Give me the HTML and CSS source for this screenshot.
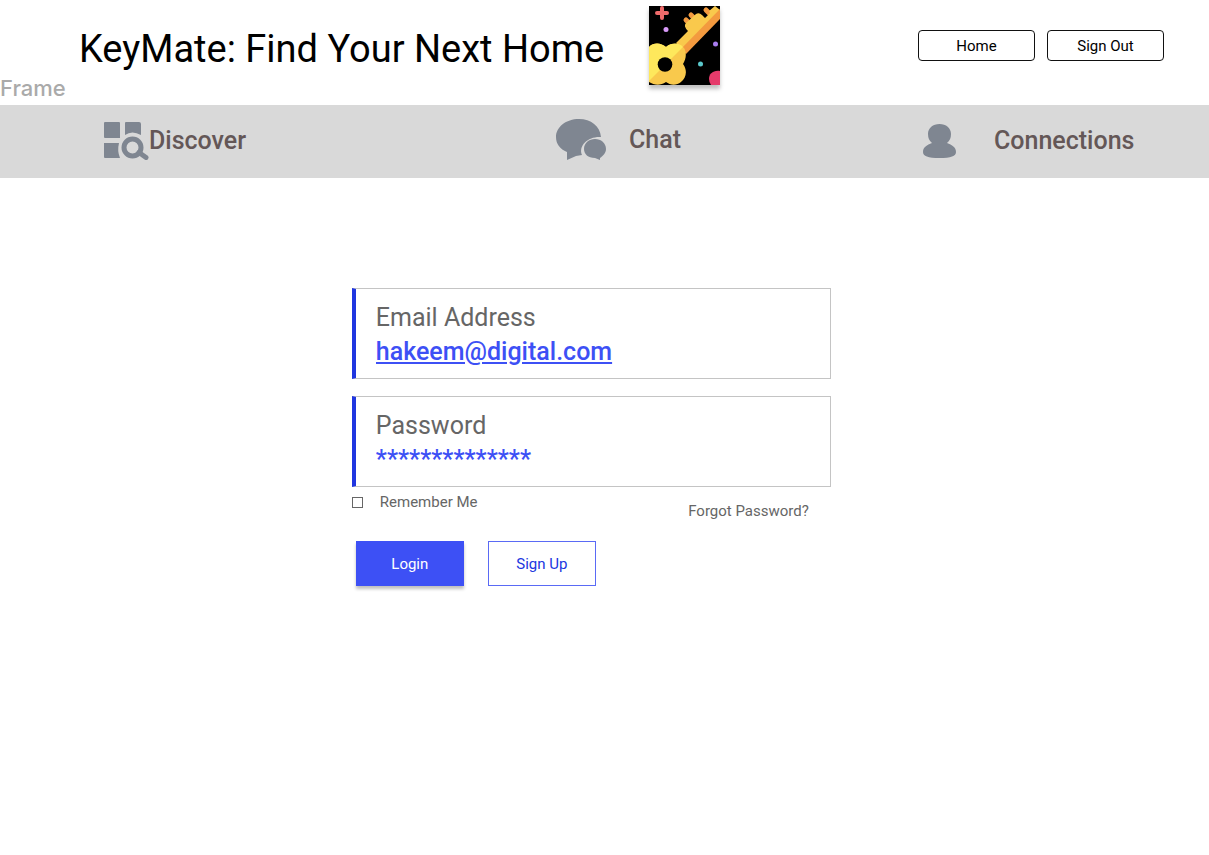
FILE: index.html
```html
<!DOCTYPE html>
<html lang="en">
<head>
<meta charset="utf-8">
<meta name="viewport" content="width=device-width, initial-scale=1">
<title>KeyMate</title>
<link rel="stylesheet" href="styles.css">
</head>
<body>
<header class="header">
  <span class="frame-label">Frame</span>
  <h1 class="title">KeyMate: Find Your Next Home</h1>
  <svg class="logo" viewBox="0 0 71 79" preserveAspectRatio="none" role="img" aria-label="KeyMate guitar logo">
    <rect width="71" height="79" fill="#000"/>
    <path d="M13 2v10M8 7h10" stroke="#ef6b6b" stroke-width="4" stroke-linecap="round"/>
    <path d="M37 14l4 4M42 9l5 5M57 4l5 5" stroke="#f39a3f" stroke-width="5" stroke-linecap="round"/>
    <path d="M27 37L39 25Q34 20 37 17L47 8Q50 6 53 9L56 12L61 7L60 5L66 0L71 4V12L37 47Z" fill="#f9c94c"/>
    <path d="M32 43L71 3V13L37 48Z" fill="#f39a3f"/>
    <path d="M0 41C5 36 12 37 17 41C23 36 31 37 35 42C38 47 37 53 34 58C39 65 37 72 32 76C27 80 21 79 17 76C11 80 5 79 0 76Z" fill="#f9c94c"/>
    <path d="M0 41C5 36 12 37 17 41C23 36 31 37 34 41L0 75Z" fill="#fee85c"/>
    <circle cx="16" cy="58.500" r="7.300" fill="#000"/>
    <circle cx="17" cy="23.500" r="2.500" fill="#d99bfa"/>
    <circle cx="66.500" cy="38" r="2.500" fill="#a97df0"/>
    <circle cx="51.500" cy="58" r="2.500" fill="#5ac8cb"/>
    <path d="M71 65C64 64 60 68 60 73Q60 76 62 79H71Z" fill="#e53b6b"/>
  </svg>
  <div class="actions">
    <button class="pill" type="button">Home</button>
    <button class="pill" type="button">Sign Out</button>
  </div>
</header>
<nav class="nav">
  <a class="nav-link discover" href="#discover">
    <svg width="45" height="38" viewBox="0 0 45 38" aria-hidden="true">
      <path d="M1 0H15Q16 0 16 1V16H1Q0 16 0 15V1Q0 0 1 0ZM21 0H35Q37 0 37 2V13Q28 8 21 13V1Q21 0 22 0ZM0 21H15Q13 29 16 36H1Q0 36 0 35Z" fill="#7f8691"/>
      <circle cx="28.500" cy="25.500" r="8.500" fill="none" stroke="#7f8691" stroke-width="5"/>
      <path d="M35 30.500L42 35.500" stroke="#7f8691" stroke-width="5" stroke-linecap="round"/>
    </svg>
    <span>Discover</span>
  </a>
  <a class="nav-link chat" href="#chat">
    <svg width="50" height="42" viewBox="0 0 50 42" aria-hidden="true">
      <path d="M23 0C35 0 44 7 45 18C33 17 22 26 26 36L20 37L11 41V33C4 30 0 25 0 18C0 8 10 0 23 0Z" fill="#7f8691"/>
      <path d="M39 20C45 20 50 24 50 30C50 34 47 37 44 39V41L39 39C32 39 28 35 28 30C28 24 33 20 39 20Z" fill="#7f8691"/>
    </svg>
    <span>Chat</span>
  </a>
  <a class="nav-link connections" href="#connections">
    <svg width="33" height="34" viewBox="0 0 33 34" aria-hidden="true">
      <path d="M16.500 0C23 0 28 4 28 10Q28 16 24 19C29 21 33 23 33 28C33 32 28 34 16.500 34C5 34 0 32 0 28C0 23 4 21 9 19Q5 16 5 10C5 4 10 0 16.500 0Z" fill="#7f8691"/>
    </svg>
    <span>Connections</span>
  </a>
</nav>
<main class="main">
  <form class="login">
    <div class="field">
      <label for="email">Email Address</label>
      <input class="underlined" id="email" type="text" inputmode="email" value="hakeem@digital.com" spellcheck="false">
    </div>
    <div class="field">
      <label for="password">Password</label>
      <input id="password" type="text" value="**************" spellcheck="false" autocomplete="off">
    </div>
    <div class="options">
      <label class="remember"><input type="checkbox">Remember Me</label>
      <a class="forgot" href="#forgot">Forgot Password?</a>
    </div>
    <div class="buttons">
      <button class="btn primary" type="submit">Login</button>
      <button class="btn outline" type="button">Sign Up</button>
    </div>
  </form>
</main>
</body>
</html>
```

FILE: styles.css
```css
* {
  box-sizing: border-box;
}

body {
  margin: 0;
  background: #fff;
  font-family: Roboto, "Liberation Sans", sans-serif;
}

button,
input {
  font-family: inherit;
}

.header {
  display: grid;
  grid-template-columns: 79px 570px 1fr auto;
  align-items: start;
  min-height: 105px;
  padding-right: 45px;
}

.frame-label {
  align-self: end;
  padding-bottom: 4px;
  font: 500 22px/26px Inter, sans-serif;
  color: #aaa;
}

.title {
  margin: 19px 0 0;
  font-size: 38px;
  font-weight: 400;
  line-height: 60px;
  white-space: nowrap;
  color: #000;
}

.logo {
  width: 71px;
  height: 79px;
  margin-top: 6px;
  box-shadow: 0 4px 4px rgba(0, 0, 0, 0.25);
}

.actions {
  display: flex;
  gap: 12px;
  margin-top: 30px;
}

.pill {
  width: 117px;
  height: 31px;
  padding: 0;
  border: 1px solid #111;
  border-radius: 4px;
  background: #fff;
  font-size: 15px;
  color: #000;
}

.nav {
  display: grid;
  grid-template-columns: 452fr 367fr 286fr;
  align-items: center;
  height: 73px;
  padding-left: 104px;
  background: #d9d9d9;
}

.nav-link {
  display: flex;
  align-items: center;
  padding-bottom: 2px;
  font-size: 25px;
  font-weight: 500;
  line-height: 30px;
  color: #645757;
  text-decoration: none;
}

.chat {
  gap: 23px;
  padding-bottom: 4px;
}

.connections {
  gap: 38px;
}

.main {
  padding: 110px 20px 40px 29.1%;
}

.login {
  max-width: 479px;
}

.field {
  display: flex;
  flex-direction: column;
  height: 91px;
  margin-bottom: 17px;
  padding: 14px 20px 0;
  border: 1px solid #c4c4c4;
  border-left: 4px solid #2036e0;
}

.field label {
  font-size: 25px;
  line-height: 30px;
  color: #666;
}

.field input {
  width: 100%;
  height: 36px;
  padding: 0;
  border: 0;
  outline: 0;
  background: transparent;
  font-size: 25px;
  font-weight: 500;
  color: #3d50f5;
}

.field .underlined {
  text-decoration: underline;
}

.options {
  display: flex;
  justify-content: space-between;
  margin-top: -11px;
  padding-right: 22px;
  font-size: 15px;
  line-height: 18px;
  color: #666;
}

.remember {
  display: flex;
  align-items: center;
  align-self: start;
  gap: 17px;
}

.remember input {
  appearance: none;
  width: 11px;
  height: 11px;
  margin: 0;
  border: 1px solid #666;
}

.remember input:checked {
  background: #3d50f5;
}

.forgot {
  padding-top: 9px;
  color: inherit;
  text-decoration: none;
}

.buttons {
  display: flex;
  gap: 24px;
  margin-top: 21px;
  padding-left: 4px;
}

.btn {
  width: 108px;
  height: 45px;
  padding: 0;
  font-size: 15px;
}

.primary {
  border: 0;
  background: #3d50f5;
  box-shadow: 0 3px 3px rgba(0, 0, 0, 0.25);
  color: #fff;
}

.outline {
  border: 1px solid #5a6af5;
  background: #fff;
  color: #2036e0;
}
```
